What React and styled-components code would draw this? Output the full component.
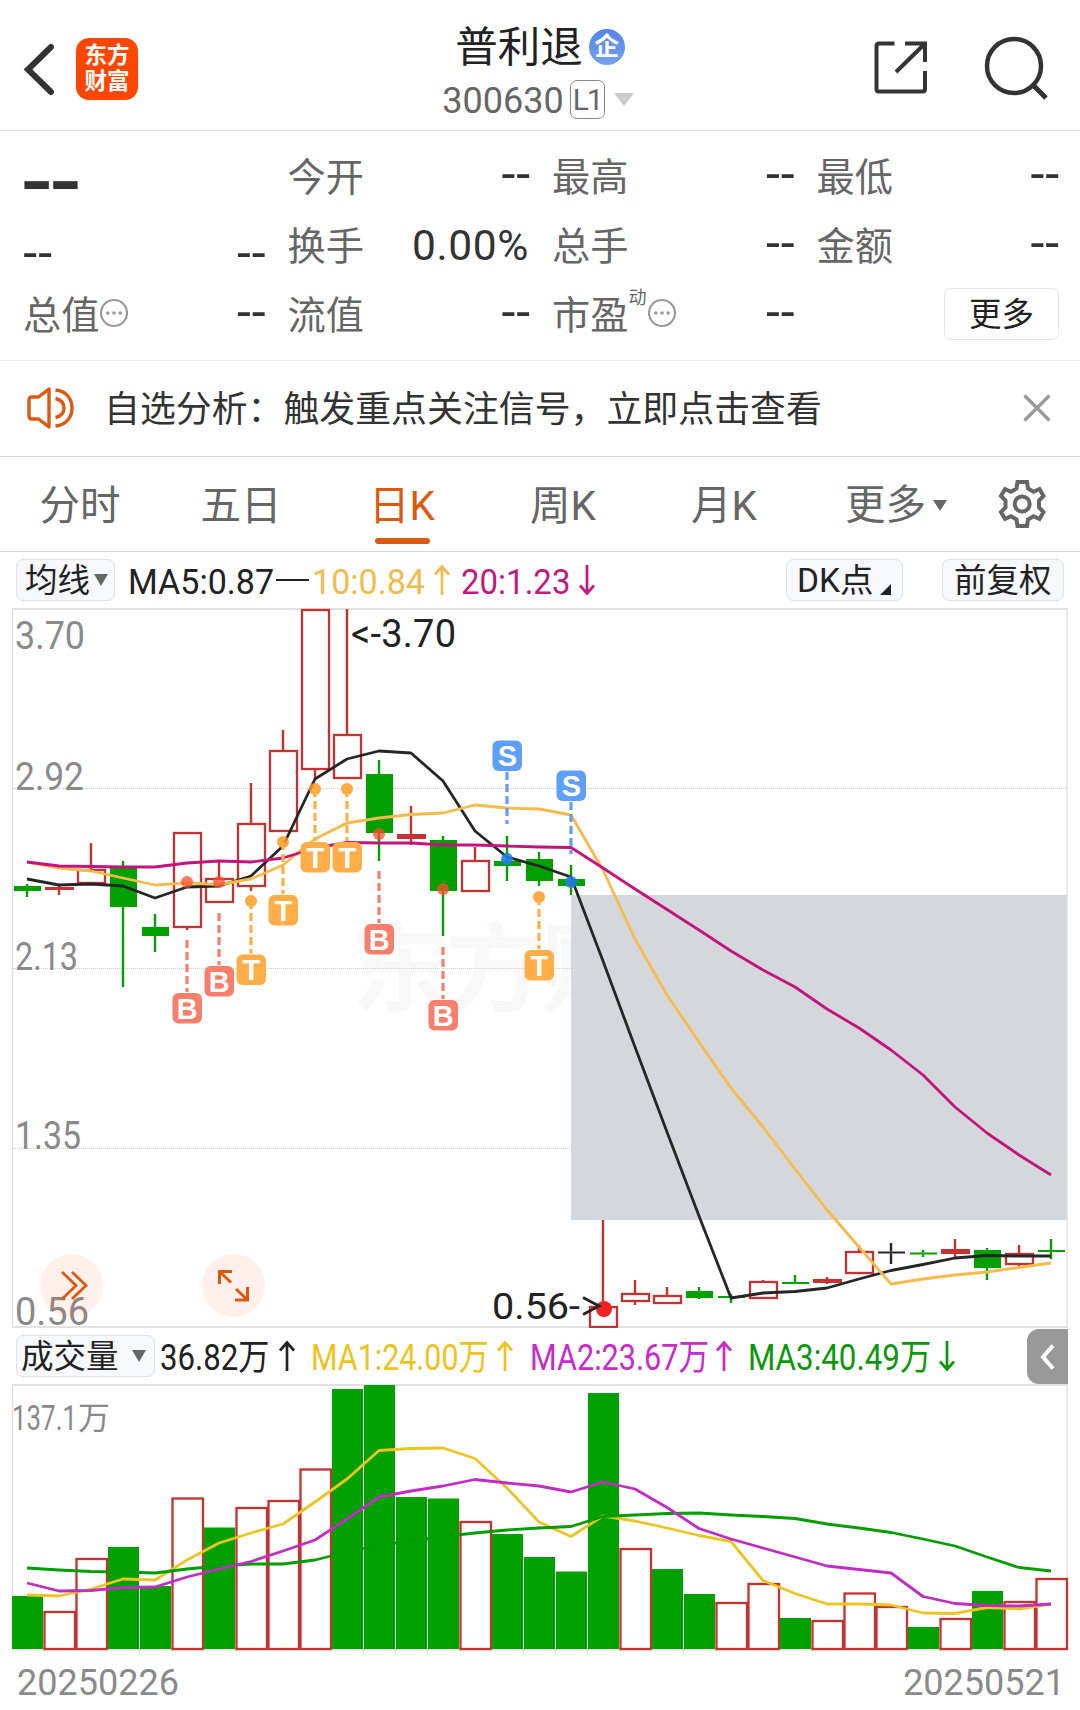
import React from 'react';
import styled, { createGlobalStyle } from 'styled-components';

const GlobalStyle = createGlobalStyle`
    * {
        box-sizing: border-box;
    }

    body {
        margin: 0;
        background: #fff;
        font-family: Roboto, 'Noto Sans CJK SC', sans-serif;
        color: #262626;
    }

    svg {
        display: block;
        flex: none;
    }
`

const Page = styled.div`
    width: 1080px;
    height: 1710px;
    overflow: hidden;
    background: #fff;
`

const Header = styled.header`
    display: grid;
    grid-template-columns: 1fr auto 1fr;
    height: 131px;
    border-bottom: 1px solid #d6d6d6;
`

const HeaderSide = styled.div`
    display: flex;
    align-items: center;
    justify-content: ${({ $end }) => $end ? 'flex-end' : 'flex-start'};
    gap: ${({ $end }) => $end ? '56px' : '20px'};
    padding: ${({ $end }) => $end ? '4px 31px 0 0' : '7px 0 0 23px'};
`

const Logo = styled.div`
    display: flex;
    flex-direction: column;
    justify-content: center;
    align-items: center;
    width: 62px;
    height: 62px;
    border-radius: 13px;
    background: #ff4600;
    color: #fff;
    font-size: 22.5px;
    font-weight: 700;
    line-height: 26px;
    padding-bottom: 1px;
`

const TitleBlock = styled.div`
    display: flex;
    flex-direction: column;
    align-items: center;
    padding-top: 18px;
`

const Title = styled.h1`
    display: flex;
    align-items: center;
    gap: 6px;
    margin: 0;
    height: 60px;
    font-size: 42.5px;
    font-weight: 400;
    line-height: 60px;
    color: #222;
`

const Tag = styled.span`
    display: flex;
    align-items: center;
    justify-content: center;
    width: 36px;
    height: 36px;
    margin-top: -3px;
    border-radius: 50%;
    background: linear-gradient(#5684e8, #76a0ea);
    color: #fff;
    font-size: 25px;
    font-weight: 700;
    font-style: oblique 8deg;
    line-height: 36px;
`

const Code = styled.div`
    display: flex;
    align-items: center;
    height: 46px;
    margin-left: -4px;
    color: #666;
    font-size: 36px;
    line-height: 46px;

    svg {
        margin: -3px 0 0 9px;
    }
`

const Level = styled.span`
    width: 35px;
    height: 39px;
    margin: -4px 0 0 6px;
    border: 1.5px solid #888;
    border-radius: 7px;
    font-size: 30px;
    line-height: 37px;
    text-align: center;
    letter-spacing: -2px;
`

const Quote = styled.section`
    display: grid;
    grid-template-columns: repeat(4, 240.5px);
    grid-template-rows: repeat(3, 69px);
    column-gap: 24px;
    height: 230px;
    padding: 10px 22px 0 23px;
    border-bottom: 1px solid #ececec;
`

const Cell = styled.div`
    display: flex;
    align-items: center;
    justify-content: space-between;
    padding-top: ${({ $drop }) => $drop || 0}px;
`

const Label = styled.span`
    display: flex;
    align-items: center;
    padding-top: 4px;
    color: #666;
    font-size: 38.2px;
    line-height: 60px;

    svg {
        margin: -5px 0 0 1px;
    }

    sup {
        align-self: flex-start;
        margin: 0 1px 0 0;
        font-size: 18px;
        line-height: 24px;
    }
`

const Value = styled.span`
    margin-right: -1px;
    padding-top: 3px;
    color: #333;
    font-size: 42.5px;
    letter-spacing: 0.6px;
    line-height: 60px;
`

const Dashes = styled.span`
    color: #333;
    font-family: 'Liberation Sans', Arial, sans-serif;
    font-size: ${({ $big }) => $big ? 100 : 49}px;
    letter-spacing: ${({ $big }) => $big ? -4.5 : -1.4}px;
    line-height: 40px;
    margin: ${({ $big }) => $big ? '-27px 0 0 -3px' : '-8px -2px 0 -1px'};
`

const MoreButton = styled.button`
    width: 115px;
    height: 52px;
    margin: 1px -2px 0 auto;
    padding: 2px 0 0;
    border: 1.5px solid #e4e6e8;
    border-radius: 7px;
    background: #fff;
    color: #222;
    font: inherit;
    font-size: 32.5px;
    line-height: 46px;
`

const Notice = styled.section`
    display: flex;
    align-items: center;
    height: 96px;
    padding: 0 29px 0 25px;
    border-bottom: 1px solid #d9d9d9;
    color: #333;
    font-size: 35.9px;

    svg {
        margin-top: -2px;
    }

    p {
        flex: 1;
        margin: 2px 0 0 29px;
        line-height: 54px;
    }
`

const Tabs = styled.nav`
    display: flex;
    align-items: center;
    height: 95px;
    border-bottom: 1px solid #d9d9d9;
`

const Tab = styled.div`
    display: flex;
    flex-direction: column;
    align-items: center;
    width: 161px;
    height: 94px;
    padding: 19px 1px 0 0;
    color: ${({ $active }) => $active ? '#db5a10' : '#666'};
    font-size: 40.5px;
    line-height: 60px;

    &::after {
        content: '';
        width: 55px;
        height: 6px;
        margin-top: 2px;
        border-radius: 3px;
        background: ${({ $active }) => $active ? '#db5a10' : 'transparent'};
    }
`

const MoreTab = styled.div`
    display: flex;
    align-items: center;
    gap: 7px;
    width: 154px;
    padding: 2px 0 0 40px;
    color: #666;
    font-size: 40.5px;
    line-height: 60px;
`

const GearSlot = styled.div`
    margin-left: 39px;
`

const Legend = styled.div`
    display: flex;
    align-items: center;
    height: 56px;
    padding: 0 16px;
`

const Chip = styled.button`
    display: flex;
    align-items: center;
    width: ${({ $w }) => $w}px;
    height: 42px;
    margin-left: ${({ $ml }) => $ml || 0};
    padding: 2px 0 0 ${({ $pad }) => $pad}px;
    border: 1.5px solid #dfe2e5;
    border-radius: 7px;
    background: #f6f8fb;
    color: #222;
    font: inherit;
    font-size: ${({ $size }) => $size || 32.5}px;
    line-height: 38px;
    white-space: nowrap;

    svg {
        margin-left: ${({ $gap }) => $gap || 0}px;
        align-self: ${({ $corner }) => $corner ? 'flex-end' : 'center'};
        margin-bottom: ${({ $corner }) => $corner ? 5 : 2}px;
    }
`

const Reading = styled.span`
    width: ${({ $w }) => $w}px;
    margin-left: ${({ $ml }) => $ml}px;
    padding-top: 3px;
    color: ${({ $c }) => $c};
    font-size: ${({ $size }) => $size || 35.5}px;
    line-height: 44px;
    white-space: nowrap;

    span {
        display: inline-block;
        transform: scaleX(${({ $squeeze }) => $squeeze || 0.96});
        transform-origin: left;
    }
`

const Trend = styled.span`
    display: flex;
    margin-left: ${({ $ml }) => $ml}px;
    color: ${({ $c }) => $c};
`

const Collapse = styled.button`
    display: flex;
    align-items: center;
    justify-content: center;
    width: 41px;
    height: 55px;
    margin: 1px -4px 0 auto;
    padding: 0;
    border: 0;
    border-radius: 12px 0 0 12px;
    background: #999;
`

const Dates = styled.footer`
    display: flex;
    justify-content: space-between;
    padding: 8px 15px 0 17px;
    color: #8a8a8a;
    font-size: 36px;
    line-height: 46px;
`

const AxisText = styled.text`
    fill: ${({ $dark }) => $dark ? '#222' : '#8a8a8a'};
    font-family: Roboto, 'Noto Sans CJK SC', sans-serif;
    font-size: ${({ $size }) => $size || 38}px;
`

const Watermark = styled.text`
    fill: #f8f8f8;
    font-family: 'Noto Sans CJK SC', sans-serif;
    font-size: 98px;
    font-weight: 700;
`

const MarkText = styled.text`
    fill: #fff;
    font-family: 'Liberation Sans', Arial, sans-serif;
    font-size: 29px;
    font-weight: 700;
    text-anchor: middle;
`

const RED = '#c63232'
const GREEN = '#00a000'
const BLACK = '#262626'

const cx = (i) => 27 + 32 * i

// [kind, high, bodyTop, bodyBottom, low]
// r hollow red, f filled red, g green, k black
const candles = [
    ['g', 884, 886, 891, 897],
    ['f', 884, 887, 890, 895],
    ['r', 843, 869, 884, 884],
    ['g', 861, 867, 907, 987],
    ['g', 914, 927, 936, 952],
    ['r', 832, 832, 928, 930],
    ['r', 862, 878, 903, 903],
    ['r', 783, 823, 887, 891],
    ['r', 730, 750, 832, 832],
    ['r', 609, 609, 770, 778],
    ['r', 609, 734, 779, 779],
    ['g', 760, 774, 833, 861],
    ['f', 806, 834, 839, 845],
    ['g', 836, 840, 891, 936],
    ['r', 847, 860, 892, 892],
    ['g', 836, 861, 866, 881],
    ['g', 852, 859, 881, 886],
    ['g', 865, 879, 886, 895],
    ['r', 1220, 1306, 1328, 1328],
    ['r', 1280, 1293, 1302, 1305],
    ['r', 1287, 1295, 1304, 1304],
    ['g', 1287, 1291, 1298, 1299],
    ['g', 1294, 1296, 1298, 1303],
    ['r', 1280, 1281, 1299, 1299],
    ['g', 1275, 1282, 1284, 1284],
    ['f', 1277, 1279, 1283, 1284],
    ['r', 1245, 1251, 1274, 1274],
    ['k', 1243, 1251.5, 1253.5, 1264],
    ['g', 1250, 1252.5, 1254.5, 1257],
    ['f', 1239, 1249, 1254, 1258],
    ['g', 1248, 1250, 1268, 1280],
    ['r', 1245, 1253, 1265, 1266],
    ['g', 1239, 1250, 1252, 1259],
]

const ma5 = [879, 885, 884, 886, 898, 887, 886, 876, 846, 779, 759, 751, 753, 781, 831, 857, 866, 877, 961, 1047, 1132, 1216, 1298, 1293, 1291.5, 1288, 1279, 1270.5, 1264.5, 1258, 1255.5, 1256, 1256]
const ma10 = [862, 868, 871, 878, 885, 883, 884.5, 879, 865, 839, 823, 818, 814.5, 813, 805, 808, 809, 815, 870, 939, 995, 1042, 1088, 1127, 1169, 1210, 1247, 1284, 1279, 1275, 1272, 1267.5, 1263]
const ma20 = [862, 866, 866.5, 867, 867, 863, 861, 862, 858, 848, 842.5, 843, 843, 845, 845, 846, 847, 847.5, 868, 889, 909.5, 930, 951, 970, 987, 1009, 1028, 1050, 1075, 1107, 1133, 1155, 1175]

const MARK_COLORS = { B: '#fa7e6c', T: '#ffae48', S: '#5e9ffa' }

// badge = top of the letter badge, stem = far end of the dashed line
const marks = [
    { t: 'B', i: 5, badge: 993, stem: 940, dot: 882 },
    { t: 'B', i: 6, badge: 966, stem: 913, dot: 882 },
    { t: 'T', i: 7, badge: 954.5, stem: 901, dot: 901 },
    { t: 'T', i: 8, badge: 895, stem: 842, dot: 842 },
    { t: 'T', i: 9, badge: 842, stem: 789, dot: 789 },
    { t: 'T', i: 10, badge: 842, stem: 789, dot: 789 },
    { t: 'B', i: 11, badge: 924, stem: 871, dot: 834 },
    { t: 'B', i: 13, badge: 1000, stem: 947, dot: 889 },
    { t: 'T', i: 16, badge: 950, stem: 897, dot: 897 },
    { t: 'S', i: 15, badge: 740.5, stem: 824, dot: 859 },
    { t: 'S', i: 17, badge: 770.5, stem: 854, dot: 882 },
]
const DOT_COLORS = { B: 'rgba(255, 75, 45, .75)', T: 'rgba(255, 155, 30, .85)', S: 'rgba(35, 125, 230, .9)' }

// [kind, top]
const volumes = [
    ['g', 1596], ['r', 1611], ['r', 1558], ['g', 1547], ['g', 1586], ['r', 1497.5], ['g', 1527.5],
    ['r', 1507], ['r', 1500], ['r', 1468.5], ['g', 1389], ['g', 1385], ['g', 1497], ['g', 1498.5],
    ['r', 1521], ['g', 1534], ['g', 1557], ['g', 1571.5], ['g', 1393], ['r', 1548], ['g', 1569],
    ['g', 1594], ['r', 1602], ['r', 1583], ['g', 1618], ['r', 1620], ['r', 1592.5], ['r', 1606],
    ['g', 1627], ['r', 1618], ['g', 1591], ['r', 1601], ['r', 1578],
]

const vol1 = [1595, 1596, 1589, 1579, 1580, 1560, 1543, 1533, 1524, 1502, 1479, 1450.5, 1448.5, 1448, 1458.5, 1488, 1522, 1536.5, 1516, 1521, 1528, 1535.5, 1541.5, 1580.5, 1593.5, 1604, 1604, 1605, 1613, 1613.5, 1607.5, 1609, 1604]
const vol2 = [1583, 1591, 1590.5, 1587.5, 1587, 1577, 1569, 1561.5, 1551, 1540, 1519, 1497, 1491, 1486, 1479.5, 1483, 1486, 1492, 1482, 1489, 1507.5, 1528.5, 1539, 1548, 1557, 1566, 1569.5, 1573, 1596.5, 1603.5, 1605.5, 1606, 1604]
const vol3 = [1568, 1570, 1571.5, 1572, 1573, 1569, 1566, 1564, 1564, 1560, 1552, 1545, 1541, 1536.5, 1533, 1530, 1528, 1526.5, 1516.5, 1515, 1513.5, 1513, 1515, 1516.5, 1518.5, 1524, 1528, 1532.5, 1539, 1546, 1557, 1567.5, 1571]

const Line = ({ data, color, width = 2.8 }) => (
    <polyline
        points={data.map((y, i) => `${cx(i)},${y}`).join(' ')}
        fill="none"
        stroke={color}
        strokeWidth={width}
        strokeLinejoin="round"
    />
)

const Candle = ({ i, candle: [kind, high, top, bottom, low] }) => {
    const x = cx(i)
    const color = kind === 'g' ? GREEN : kind === 'k' ? BLACK : RED

    return (
        <g>
            {top > high && <rect x={x - 1.2} y={high} width="2.4" height={top - high} fill={color} />}
            {low > bottom && <rect x={x - 1.2} y={bottom} width="2.4" height={low - bottom} fill={color} />}
            {kind === 'r'
                ? <rect x={x - 13} y={top + 1} width="27" height={bottom - top - 2} fill="none" stroke={color} strokeWidth="2.3" />
                : <rect x={x - (kind === 'f' ? 14 : 13)} y={top} width={kind === 'f' ? 29 : 27} height={bottom - top} fill={color} />
            }
        </g>
    )
}

const Mark = ({ mark: { t, i, badge, stem, dot } }) => {
    const x = cx(i)
    const edge = t === 'S' ? badge + 31.5 : badge - 1

    return (
        <g>
            <circle cx={x} cy={dot} r="6" fill={DOT_COLORS[t]} />
            <line
                x1={x} x2={x}
                y1={t === 'S' ? edge : stem} y2={t === 'S' ? stem : edge}
                stroke={MARK_COLORS[t]} strokeWidth="3.2" strokeDasharray="8 4"
            />
            <rect x={x - 14.5} y={badge} width="29.5" height="30.5" rx="6" fill={MARK_COLORS[t]} />
            <MarkText x={x + 0.3} y={badge + 25.7}>{t}</MarkText>
        </g>
    )
}

const PriceChart = () => (
    <svg width="1080" height="720" viewBox="0 608 1080 720">
        <Watermark x="351" y="1004" textLength="288">东方财</Watermark>
        <path d="M12.5 608.5V1328M1067 608.5V1328" stroke="#e2e2e2" strokeWidth="1.5" />
        <path d="M12 609H1067.5M12 1327H1067.5" stroke="#e2e2e2" strokeWidth="2" />
        <path d="M13 788.5H1067M13 968.5H1067M13 1148.5H1067" stroke="#cfcfcf" strokeWidth="1" strokeDasharray="1 1" />
        <rect x="571" y="895" width="496" height="325" fill="#d4d7db" />

        <AxisText x="15" y="648.5" textLength="70" lengthAdjust="spacingAndGlyphs">3.70</AxisText>
        <AxisText x="15" y="789.5" textLength="69" lengthAdjust="spacingAndGlyphs">2.92</AxisText>
        <AxisText x="15" y="969.5" textLength="63" lengthAdjust="spacingAndGlyphs">2.13</AxisText>
        <AxisText x="15" y="1149" textLength="66" lengthAdjust="spacingAndGlyphs">1.35</AxisText>
        <AxisText x="15" y="1324.5" textLength="74">0.56</AxisText>

        {candles.map((candle, i) => <Candle key={i} i={i} candle={candle} />)}
        <Line data={ma5} color={BLACK} />
        <Line data={ma10} color="#f6bb4a" />
        <Line data={ma20} color="#c4147c" />
        {marks.map((mark) => <Mark key={mark.t + mark.i} mark={mark} />)}

        <AxisText $dark x="351" y="646.5" textLength="105">&lt;-3.70</AxisText>
        <AxisText $dark $size={37} x="492" y="1319" textLength="88" lengthAdjust="spacingAndGlyphs">0.56-</AxisText>
        <circle cx="604" cy="1309" r="8" fill="#f02222" />
        <path d="M583 1297.5L599 1306L583 1314.5" fill="none" stroke="#222" strokeWidth="2.8" />

        <circle cx="71.5" cy="1285.5" r="31.5" fill="#ff5a1f" fillOpacity=".09" />
        <path d="M62 1272L76 1285.5L62 1299M72 1272L86 1285.5L72 1299" fill="none" stroke="#db5a10" strokeWidth="2.8" />
        <circle cx="233.5" cy="1285.5" r="31.5" fill="#ff5a1f" fillOpacity=".09" />
        <path d="M219.5 1284V1271.5H232M220 1272L231 1282.5M235 1300H247.5V1287M247 1299.5L236 1289" fill="none" stroke="#db5a10" strokeWidth="3" />
    </svg>
)

const VolumeChart = () => (
    <svg width="1080" height="268" viewBox="0 1384 1080 268">
        <path d="M12.5 1384.5V1650M1067 1384.5V1650" stroke="#e2e2e2" strokeWidth="1.5" />
        <path d="M12 1385H1067.5M12 1649.5H1067.5" stroke="#e2e2e2" strokeWidth="2" />
        {volumes.map(([kind, top], i) => (
            kind === 'g'
                ? <rect key={i} x={12 + 32 * i} y={top} width="31" height={1649 - top} fill={GREEN} />
                : <rect key={i} x={12.5 + 32 * i} y={top + 1} width="30.5" height={1648 - top} fill="#fff" stroke={RED} strokeWidth="2.3" />
        ))}
        <Line data={vol1} color="#ebc524" />
        <Line data={vol3} color="#039c03" />
        <Line data={vol2} color="#c02cc4" />
        <AxisText $size={35} x="12" y="1430" textLength="65" lengthAdjust="spacingAndGlyphs">137.1</AxisText>
        <AxisText $size={32} x="78" y="1429">万</AxisText>
    </svg>
)

const Arrow = ({ down }) => (
    <svg width="16" height="32" viewBox="0 0 16 32" fill="none" stroke="currentColor" strokeWidth="2.7">
        <path d={down ? 'M8 1V29M1 21.5L8 29.5L15 21.5' : 'M8 31V3M1 10.5L8 2.5L15 10.5'} />
    </svg>
)

const Caret = ({ w = 14, h = 12, color = '#666' }) => (
    <svg width={w} height={h} viewBox="0 0 14 12" preserveAspectRatio="none">
        <path d="M0 0H14L7 12Z" fill={color} />
    </svg>
)

const InfoIcon = () => (
    <svg width="28" height="30" viewBox="0 0 28 30">
        <circle cx="14" cy="15" r="13" fill="none" stroke="#999" strokeWidth="2.2" />
        <circle cx="7.8" cy="15" r="1.8" fill="#999" />
        <circle cx="14" cy="15" r="1.8" fill="#999" />
        <circle cx="20.2" cy="15" r="1.8" fill="#999" />
    </svg>
)

function App() {
    return (
        <Page>
            <GlobalStyle />
            <Header>
                <HeaderSide>
                    <svg width="33" height="54" viewBox="0 0 33 54" fill="none" stroke="#333" strokeWidth="6" strokeLinecap="round">
                        <path d="M28 5L5 27.5L28 50" />
                    </svg>
                    <Logo>
                        <span>东方</span>
                        <span>财富</span>
                    </Logo>
                </HeaderSide>
                <TitleBlock>
                    <Title>普利退<Tag>企</Tag></Title>
                    <Code>
                        300630
                        <Level>L1</Level>
                        <Caret w={20} h={13} color="#ccc" />
                    </Code>
                </TitleBlock>
                <HeaderSide $end>
                    <svg width="54" height="54" viewBox="0 0 54 54" fill="none" stroke="#333" strokeWidth="4">
                        <path d="M21.5 3.5H6Q3.5 3.5 3.5 6V49Q3.5 51.5 6 51.5H49.5Q52 51.5 52 49V31M32 3.5H52V22M51 4.5L23 32" />
                    </svg>
                    <svg width="66" height="66" viewBox="0 0 66 66" fill="none" stroke="#333" strokeWidth="4.5">
                        <circle cx="31" cy="32" r="27" />
                        <path d="M50 51L63 64" strokeWidth="5" />
                    </svg>
                </HeaderSide>
            </Header>

            <Quote>
                <Cell $drop={30}><Dashes $big>--</Dashes></Cell>
                <Cell><Label>今开</Label><Dashes>--</Dashes></Cell>
                <Cell><Label>最高</Label><Dashes>--</Dashes></Cell>
                <Cell><Label>最低</Label><Dashes>--</Dashes></Cell>

                <Cell $drop={21}><Dashes>--</Dashes><Dashes>--</Dashes></Cell>
                <Cell><Label>换手</Label><Value>0.00%</Value></Cell>
                <Cell><Label>总手</Label><Dashes>--</Dashes></Cell>
                <Cell><Label>金额</Label><Dashes>--</Dashes></Cell>

                <Cell><Label>总值<InfoIcon /></Label><Dashes>--</Dashes></Cell>
                <Cell><Label>流值</Label><Dashes>--</Dashes></Cell>
                <Cell><Label>市盈<sup>动</sup><InfoIcon /></Label><Dashes>--</Dashes></Cell>
                <Cell><MoreButton>更多</MoreButton></Cell>
            </Quote>

            <Notice>
                <svg width="50" height="42" viewBox="0 0 50 42" fill="none" stroke="#db5a10" strokeWidth="3.4" strokeLinejoin="round">
                    <path d="M24 2V40L13.500 32H7Q4 32 4 29V13Q4 10 7 10H13.500Z" />
                    <path d="M30.500 11.500C36.500 13 39 17 39 21S36.500 29 30.500 30.500" />
                    <path d="M30.500 3C41.500 4 47 12 47 21S41.500 38 30.500 39" />
                </svg>
                <p>自选分析：触发重点关注信号，立即点击查看</p>
                <svg width="28" height="28" viewBox="0 0 28 28" stroke="#999" strokeWidth="3.2">
                    <path d="M1.5 1.5L26.5 26.5M26.5 1.5L1.5 26.5" />
                </svg>
            </Notice>

            <Tabs>
                <Tab>分时</Tab>
                <Tab>五日</Tab>
                <Tab $active>日K</Tab>
                <Tab>周K</Tab>
                <Tab>月K</Tab>
                <MoreTab>更多<Caret h={11} /></MoreTab>
                <GearSlot>
                    <svg width="48" height="50" viewBox="0 0 48 50" fill="none" stroke="#666" strokeWidth="4">
                        <path d="M19.5 3H29L30 9.5L35.5 12.7L41.5 10L45.5 17L41 21.5V28.5L45.5 33L41.5 40L35.5 37.3L30 40.5L29 47H19.5L18.5 40.5L13 37.3L7 40L3 33L7.5 28.5V21.5L3 17L7 10L13 12.7L18.5 9.5Z" />
                        <circle cx="24.2" cy="25" r="7.5" />
                    </svg>
                </GearSlot>
            </Tabs>

            <Legend>
                <Chip $w={99} $pad={8} $gap={4}>均线<Caret /></Chip>
                <Reading $w={148} $ml={13} $c="#222"><span>MA5:0.87</span></Reading>
                <svg width="33" height="32" viewBox="0 0 33 32" stroke="#222" strokeWidth="2.2">
                    <path d="M0 16H33" />
                </svg>
                <Reading $w={116} $ml={3} $c="#f0bc50"><span>10:0.84</span></Reading>
                <Trend $ml={6} $c="#f0bc50"><Arrow /></Trend>
                <Reading $w={110} $ml={11} $c="#c01a80" $squeeze={0.93}><span>20:1.23</span></Reading>
                <Trend $ml={8} $c="#c01a80"><Arrow down /></Trend>
                <Chip $w={117} $pad={10} $gap={6} $corner $size={33.5} $ml="auto">
                    DK点
                    <svg width="11" height="11" viewBox="0 0 11 11"><path d="M11 0V11H0Z" fill="#222" /></svg>
                </Chip>
                <Chip $w={122} $pad={11} $ml="39px">前复权</Chip>
            </Legend>

            <PriceChart />

            <Legend>
                <Chip $w={139} $pad={4} $gap={13}>成交量<Caret /></Chip>
                <Reading $w={111} $ml={5} $c="#222" $size={36} $squeeze={0.865}><span>36.82万</span></Reading>
                <Trend $ml={8} $c="#222"><Arrow /></Trend>
                <Reading $w={178} $ml={16} $c="#eec31e" $size={36} $squeeze={0.845}><span>MA1:24.00万</span></Reading>
                <Trend $ml={8} $c="#eec31e"><Arrow /></Trend>
                <Reading $w={178} $ml={17} $c="#c62ccc" $size={36} $squeeze={0.85}><span>MA2:23.67万</span></Reading>
                <Trend $ml={8} $c="#c62ccc"><Arrow /></Trend>
                <Reading $w={180} $ml={16} $c="#0a980a" $size={36} $squeeze={0.87}><span>MA3:40.49万</span></Reading>
                <Trend $ml={11} $c="#0a980a"><Arrow down /></Trend>
                <Collapse>
                    <svg width="15" height="28" viewBox="0 0 15 28" fill="none" stroke="#fff" strokeWidth="4">
                        <path d="M13 2.5L3 14L13 25.5" />
                    </svg>
                </Collapse>
            </Legend>

            <VolumeChart />

            <Dates>
                <span>20250226</span>
                <span>20250521</span>
            </Dates>
        </Page>
    );
}

export default App;
